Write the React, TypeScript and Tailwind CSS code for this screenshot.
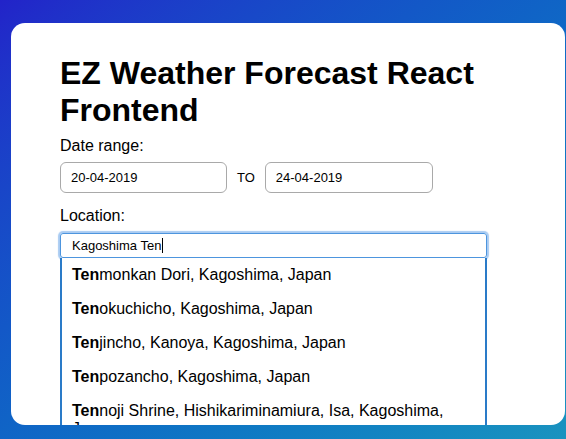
import React from "react";

const suggestions = [
  { match: "Ten", rest: "monkan Dori, Kagoshima, Japan" },
  { match: "Ten", rest: "okuchicho, Kagoshima, Japan" },
  { match: "Ten", rest: "jincho, Kanoya, Kagoshima, Japan" },
  { match: "Ten", rest: "pozancho, Kagoshima, Japan" },
  { match: "Ten", rest: "noji Shrine, Hishikariminamiura, Isa, Kagoshima, Japan" },
];

export default function App() {
  return (
    <div className="h-[439px] w-full overflow-hidden bg-linear-to-br from-[#2223c9] to-[#1a93bf] pl-[11px] pt-[23px] font-['Liberation_Sans',Arial,sans-serif] text-black">
      <div className="h-[402px] w-[554px] overflow-hidden rounded-[14px] bg-white pl-[49px] pt-8">
        <div className="w-[427px]">
          <h1 className="text-[32px] font-bold leading-[1.15]">EZ Weather Forecast React Frontend</h1>

          <label className="mt-2 block text-base leading-[1.15]">Date range:</label>
          <div className="mt-[7px] flex items-center gap-[10px]">
            <div className="flex h-[31px] w-[167px] items-center rounded-[6px] border border-[#a9a9a9] pl-[10px] text-[13px]">
              20-04-2019
            </div>
            <span className="text-[13px]">TO</span>
            <div className="flex h-[31px] w-[168px] items-center rounded-[6px] border border-[#a9a9a9] pl-[10px] text-[13px]">
              24-04-2019
            </div>
          </div>

          <label className="mt-[14px] block text-base leading-[1.15]">Location:</label>
          <div className="mt-[8px]">
            <div className="flex h-[25px] items-center rounded-[3px] border border-[#4d95de] pl-[11px] text-[13px] shadow-[0_0_1px_2px_#a9cbf2]">
              Kagoshima Ten
              <span className="ml-px inline-block h-[15px] w-px bg-black" />
            </div>
            <ul className="border-x-2 border-[#2a7bc8] bg-white">
              {suggestions.map((s, i) => (
                <li key={i} className="px-[10px] py-2 text-base leading-[18px]">
                  <span className="font-bold">{s.match}</span>
                  {s.rest}
                </li>
              ))}
            </ul>
          </div>
        </div>
      </div>
    </div>
  );
}
